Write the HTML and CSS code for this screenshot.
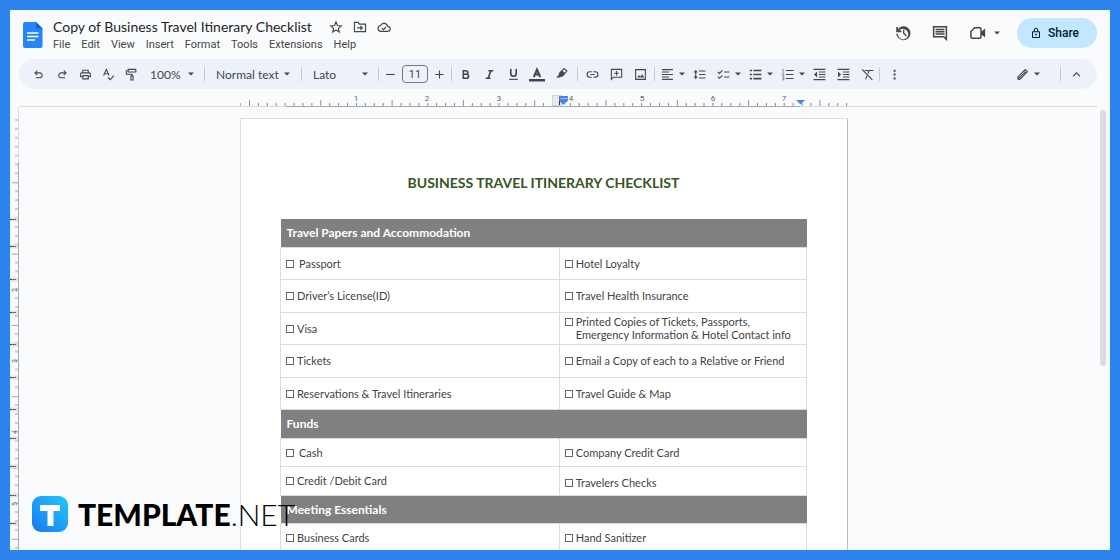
FILE: index.html
```html
<!DOCTYPE html>
<html lang="en">
<head>
<meta charset="utf-8">
<title>Copy of Business Travel Itinerary Checklist</title>
<link rel="stylesheet" href="styles.css">
</head>
<body>
<svg class="sprite" aria-hidden="true">
  <symbol id="caret" viewBox="0 0 8 8"><path d="M1 2.4h6L4 5.6z" fill="currentColor"/></symbol>
</svg>
<div class="app">
  <header class="header">
    <svg class="docs-logo" viewBox="0 0 20 26" aria-label="Docs">
      <path d="M2 0h11l6.500 6.500V24a2 2 0 0 1-2 2H2a2 2 0 0 1-2-2V2a2 2 0 0 1 2-2z" fill="#2684fc"/>
      <path d="M13 0l6.500 6.500H13z" fill="#0066da"/>
      <path d="M4 11h11.500M4 14.500h11.500M4 18h8" stroke="#fff" stroke-width="1.300"/>
    </svg>
    <div class="heading">
      <div class="title-row">
        <h1 class="doc-title">Copy of Business Travel Itinerary Checklist</h1>
        <div class="title-tools">
          <button class="mini" aria-label="Star"><svg viewBox="0 0 24 24"><path d="M12 3.500l2.600 5.900 6.400.6-4.800 4.300 1.400 6.200L12 17.200l-5.600 3.300 1.400-6.200L3 10l6.400-.6z"/></svg></button>
          <button class="mini" aria-label="Move"><svg viewBox="0 0 24 24"><path d="M2.500 20V4h6.500l2 3h10.500v13zM7 13.500h9M12.500 10l3.500 3.500-3.500 3.500"/></svg></button>
          <button class="mini" aria-label="Saved to Drive"><svg viewBox="0 0 24 24"><path d="M6.500 19.500a5 5 0 0 1-.6-9.900 6.500 6.500 0 0 1 12.300 1.300 4.300 4.300 0 0 1 .3 8.600zM8 13.500l3 3 4.500-4.500"/></svg></button>
        </div>
      </div>
      <nav class="menus">
        <button>File</button><button>Edit</button><button>View</button><button>Insert</button><button>Format</button><button>Tools</button><button>Extensions</button><button>Help</button>
      </nav>
    </div>
    <div class="actions">
      <button class="action" aria-label="Version history"><svg viewBox="0 0 24 24"><path class="solid" d="M13 3a9 9 0 0 0-7.700 4.400V4H3v7h7V8.800H6.900A7 7 0 1 1 5.100 13H3a9.200 9.200 0 0 0 9.500 8.500A9.250 9.250 0 0 0 13 3zM12 7.500v5.300l4 3.700 1.300-1.300-3.500-3.200V7.500z"/></svg></button>
      <button class="action" aria-label="Comments"><svg viewBox="0 0 24 24"><path d="M3.500 3.500h17v17L17 17H3.500z"/><path d="M6 7.300h12M6 10.300h12M6 13.300h12"/></svg></button>
      <button class="action meet" aria-label="Join a call"><svg viewBox="0 0 24 24"><path d="M7.500 5H14a2 2 0 0 1 2 2v10a2 2 0 0 1-2 2H4.500a2 2 0 0 1-2-2V10z"/><path class="solid" d="M16 10.500l5.500-4.500v12L16 13.500z"/></svg><svg class="caret"><use href="#caret"/></svg></button>
      <button class="share"><svg viewBox="0 0 24 24"><path d="M5 9.500h14V21H5zM8.500 9.500V6a3.500 3.500 0 0 1 7 0v3.500"/><circle class="solid" cx="12" cy="15.200" r="1.800"/></svg>Share</button>
    </div>
  </header>

  <div class="toolbar" role="toolbar">
    <button class="tool narrow" aria-label="Undo"><svg viewBox="0 -960 960 960"><path class="solid" d="M280-200v-80h284q63 0 109.500-40T720-420q0-60-46.500-100T564-560H312l104 104-56 56-200-200 200-200 56 56-104 104h252q97 0 166.500 63T800-420q0 94-69.500 157T564-200H280Z"/></svg></button>
    <button class="tool" aria-label="Redo"><svg viewBox="0 -960 960 960"><path class="solid" d="M396-200q-97 0-166.500-63T160-420q0-94 69.500-157T396-640h252L544-744l56-56 200 200-200 200-56-56 104-104H396q-63 0-109.500 40T240-420q0 60 46.500 100T396-280h284v80H396Z"/></svg></button>
    <button class="tool narrow" aria-label="Print"><svg viewBox="0 0 24 24"><path class="solid" d="M19 8h-1V3H6v5H5c-1.660 0-3 1.340-3 3v6h4v4h12v-4h4v-6c0-1.660-1.340-3-3-3zM8 5h8v3H8V5zm8 12v2H8v-4h8v2zm2-2v-2H6v2H4v-4c0-.55.45-1 1-1h14c.55 0 1 .45 1 1v4h-2z"/></svg></button>
    <button class="tool narrow" aria-label="Spelling"><svg viewBox="0 0 24 24"><path d="M3 14L8 2.500 13 14M5 10.500h6M11 17.500l4 4L22 14"/></svg></button>
    <button class="tool narrow" aria-label="Paint format"><svg viewBox="0 0 24 24"><path d="M6 2.500h14v5H6zM6 5H2.500v6.500H13V15M11 15h4v7h-4z"/></svg></button>
    <label class="pick zoom"><select aria-label="Zoom"><option>100%</option></select><svg class="caret"><use href="#caret"/></svg></label>
    <span class="sep"></span>
    <label class="pick style"><select aria-label="Styles"><option>Normal text</option></select><svg class="caret"><use href="#caret"/></svg></label>
    <span class="sep"></span>
    <label class="pick font"><select aria-label="Font"><option>Lato</option></select><svg class="caret"><use href="#caret"/></svg></label>
    <span class="sep"></span>
    <button class="tool narrow" aria-label="Decrease font size"><svg viewBox="0 0 24 24"><path d="M4 12h16"/></svg></button>
    <input class="size" type="text" value="11" aria-label="Font size">
    <button class="tool narrow" aria-label="Increase font size"><svg viewBox="0 0 24 24"><path d="M4.500 12h15M12 4.500v15"/></svg></button>
    <span class="sep"></span>
    <div class="group marks">
      <button class="tool" aria-label="Bold"><svg viewBox="0 0 24 24"><path class="heavy" d="M8 5h5a3.300 3.300 0 0 1 0 6.600H8zM8 11.600h6a3.700 3.700 0 0 1 0 7.400H8z"/></svg></button>
      <button class="tool" aria-label="Italic"><svg viewBox="0 0 24 24"><path class="heavy" d="M10 5h9M5 19h9M14.500 5l-5 14"/></svg></button>
      <button class="tool" aria-label="Underline"><svg viewBox="0 0 24 24"><path class="heavy" d="M7 2v8a5 5 0 0 0 10 0V2"/><path d="M4 21h16"/></svg></button>
      <button class="tool wide-icon" aria-label="Text color"><svg viewBox="0 0 18 16"><path class="thin" d="M5.800 11L9 3.500l3.200 7.500M7 8.600h4"/><path class="solid" d="M1 13h16v2.500H1z"/></svg></button>
      <button class="tool" aria-label="Highlight color"><svg viewBox="0 0 24 24"><path d="M8 10l9-9 5 4.500-8.500 9.500H8z"/><path class="solid" d="M8 9.500L13 4.500l5.500 5-5 5.500H8zM2 17.500l4.500-4.500 4 3.500-1.500 1z"/></svg></button>
    </div>
    <span class="sep"></span>
    <div class="group inserts">
      <button class="tool" aria-label="Insert link"><svg viewBox="0 0 24 24"><path d="M10.500 7H7a5 5 0 0 0 0 10h3.500M13.500 7H17a5 5 0 0 1 0 10h-3.500M8 12h8"/></svg></button>
      <button class="tool" aria-label="Add comment"><svg viewBox="0 0 24 24"><path d="M2.500 2.500h19V17H6.500l-4 4zM12 5.500v8.500M7.800 9.800h8.400"/></svg></button>
      <button class="tool" aria-label="Insert image"><svg viewBox="0 0 24 24"><path d="M3 3h18v18H3z"/><path class="solid" d="M6 17.500l3.200-4.500 2.500 3 3.300-4.500 4 6z"/></svg></button>
    </div>
    <span class="sep"></span>
    <button class="tool split" aria-label="Align"><svg viewBox="0 0 24 24"><path d="M2 3h20M2 7.500h13M2 12h20M2 16.500h13M2 21h20"/></svg><svg class="caret"><use href="#caret"/></svg></button>
    <button class="tool" aria-label="Line spacing"><svg viewBox="0 0 24 24"><path d="M11 5.500h12M11 12h12M11 18.500h12M5 5v14"/><path class="solid" d="M1 8.500L5 3.500l4 5zM1 15.500l4 5 4-5z"/></svg></button>
    <button class="tool split" aria-label="Checklist"><svg viewBox="0 0 24 24"><path d="M13 7.500h10M13 16.500h10M1.500 7l3 3L10 4.500M1.500 16l3 3 5.500-5.500"/></svg><svg class="caret"><use href="#caret"/></svg></button>
    <button class="tool split" aria-label="Bulleted list"><svg viewBox="0 0 24 24"><path class="heavy" d="M8 4.500h15M8 12h15M8 19.500h15M1.500 4.500h4M1.500 12h4M1.500 19.500h4"/></svg><svg class="caret"><use href="#caret"/></svg></button>
    <button class="tool split" aria-label="Numbered list"><svg viewBox="0 0 24 24"><path d="M9 4.500h14M9 12h14M9 19.500h14"/><path class="thin" d="M2.500 2H4v6M2 9.500h3.500L2.500 14H6M2 16.500h3.500v5.500H2M3 19h2.500"/></svg><svg class="caret"><use href="#caret"/></svg></button>
    <button class="tool" aria-label="Decrease indent"><svg viewBox="0 0 24 24"><path d="M1 2.500h22M11 7.500h12M11 12h12M11 16.500h12M1 21.500h22"/><path class="solid" d="M7.500 6.500v11L2 12z"/></svg></button>
    <button class="tool" aria-label="Increase indent"><svg viewBox="0 0 24 24"><path d="M1 2.500h22M11 7.500h12M11 12h12M11 16.500h12M1 21.500h22"/><path class="solid" d="M2 6.500v11L7.500 12z"/></svg></button>
    <button class="tool" aria-label="Clear formatting"><svg viewBox="0 0 24 24"><path d="M7 4.500h16M15 5l-2 5.500M11 14l-2.500 7M2 2.500L21 22"/></svg></button>
    <span class="sep"></span>
    <button class="tool more" aria-label="More"><svg viewBox="0 0 24 24"><path class="solid" d="M10.300 3h3.700v3.700h-3.700zM10.300 10.200h3.700v3.700h-3.700zM10.300 17.400h3.700v3.700h-3.700z"/></svg></button>
    <button class="tool split editing" aria-label="Editing mode"><svg viewBox="0 0 24 24"><path d="M3.500 20.500v-4L17 3l4 4L7.500 20.500zM14 6l4 4M4.500 19.500L17.500 7"/></svg><svg class="caret"><use href="#caret"/></svg></button>
    <span class="sep"></span>
    <button class="tool hide" aria-label="Hide the menus"><svg viewBox="0 0 24 24"><path d="M5.500 15.500L12 9l6.500 6.500"/></svg></button>
  </div>

  <div class="ruler">
    <svg class="ruler-scale" viewBox="0 0 608 18">
      <defs>
        <pattern id="inch" x="9" y="0" width="71.300" height="18" patternUnits="userSpaceOnUse">
          <path d="M.5 11v6" stroke="#8c8f93"/>
          <path d="M9.400 14v3M18.300 14v3M27.200 14v3M36.100 14v3M45 14v3M54 14v3M62.900 14v3" stroke="#85888c"/>
        </pattern>
      </defs>
      <path d="M46 17.500h514" stroke="#a9abae"/>
      <path d="M.5 14v3" stroke="#b0b2b5"/>
      <rect x="9" width="599" height="17" fill="url(#inch)"/>
      <rect x="312.500" y="6.500" width="9" height="10" fill="#e8e8e8" stroke="#d5d5d5"/>
      <g class="ruler-num">
        <text x="116" y="12">1</text><text x="187" y="12">2</text><text x="259" y="12">3</text><text x="331" y="12">4</text><text x="402" y="12">5</text><text x="473" y="12">6</text><text x="544" y="12">7</text>
      </g>
      <path d="M319.500 7v9" stroke="#333"/>
      <path d="M319 7h9v2h-9zM319 9.500h9v2L323.500 16 319 11.500z" fill="#4285f4"/>
      <path d="M556 11h9l-4.500 4.500z" fill="#4285f4"/>
    </svg>
  </div>

  <main class="workspace">
    <svg class="side-ruler">
      <defs>
        <pattern id="vinch" x="0" y="4" width="9" height="71.300" patternUnits="userSpaceOnUse">
          <path d="M5 8.900h3M5 17.800h3M5 26.700h3M5 35.600h3M5 44.500h3M5 53.400h3M5 62.300h3" stroke="#9a9da0"/>
          <path d="M2 .5h6" stroke="#a0a3a6"/>
        </pattern>
      </defs>
      <path d="M8.500 0v55" stroke="#dadce0"/>
      <path d="M8.500 55v500" stroke="#a9abae"/>
      <rect y="12" width="9" height="440" fill="url(#vinch)"/>
      <g class="side-num">
        <text transform="translate(7 183) rotate(-90)">2</text><text transform="translate(7 254) rotate(-90)">3</text><text transform="translate(7 325) rotate(-90)">4</text><text transform="translate(7 397) rotate(-90)">5</text>
      </g>
      <path d="M0 112.500h8M0 139.500h8M0 172.500h8M0 205.500h8M0 237.500h8M0 270.500h8M0 302.500h8M0 331.500h8M0 359.500h8M0 388.500h8M0 416.500h8" stroke="#e2e2e2" stroke-width="4"/>
      <path d="M0 112.500h6M0 139.500h6M0 172.500h6M0 205.500h6M0 237.500h6M0 270.500h6M0 302.500h6M0 331.500h6M0 359.500h6M0 388.500h6M0 416.500h6" stroke="#444" stroke-dasharray="2 .6"/>
    </svg>
    <div class="canvas">
      <article class="page">
        <h2 class="page-title">BUSINESS TRAVEL ITINERARY CHECKLIST</h2>
        <table class="checklist">
          <colgroup><col class="col-left"><col></colgroup>
          <tr class="section"><th colspan="2">Travel Papers and Accommodation</th></tr>
          <tr><td><label class="spaced"><input type="checkbox">Passport</label></td><td><label><input type="checkbox">Hotel Loyalty</label></td></tr>
          <tr><td><label><input type="checkbox">Driver’s License(ID)</label></td><td><label><input type="checkbox">Travel Health Insurance</label></td></tr>
          <tr><td><label><input type="checkbox">Visa</label></td><td><label><input type="checkbox"><span>Printed Copies of Tickets, Passports,<br>Emergency Information &amp; Hotel Contact info</span></label></td></tr>
          <tr><td><label><input type="checkbox">Tickets</label></td><td><label><input type="checkbox">Email a Copy of each to a Relative or Friend</label></td></tr>
          <tr><td><label><input type="checkbox">Reservations &amp; Travel Itineraries</label></td><td><label><input type="checkbox">Travel Guide &amp; Map</label></td></tr>
          <tr class="section"><th colspan="2">Funds</th></tr>
          <tr class="short"><td><label class="spaced"><input type="checkbox">Cash</label></td><td><label><input type="checkbox">Company Credit Card</label></td></tr>
          <tr class="short"><td><label><input type="checkbox">Credit /Debit Card</label></td><td class="low"><label><input type="checkbox">Travelers Checks</label></td></tr>
          <tr class="section"><th colspan="2">Meeting Essentials</th></tr>
          <tr class="short"><td><label><input type="checkbox">Business Cards</label></td><td><label><input type="checkbox">Hand Sanitizer</label></td></tr>
        </table>
      </article>
    </div>
    <div class="scrollbar"></div>
  </main>
</div>

<div class="brand">
  <svg viewBox="0 0 36 36" aria-hidden="true">
    <defs><linearGradient id="badge" x1="0" y1="1" x2="1" y2="0"><stop offset="0" stop-color="#1877f2"/><stop offset="1" stop-color="#22c8fc"/></linearGradient></defs>
    <rect width="36" height="36" rx="9" fill="url(#badge)"/>
    <path d="M8 9h20v6h-6.500v15h-6V15H8z" fill="#fff"/>
  </svg>
  <span class="brand-name"><b>TEMPLATE</b>.NET</span>
</div>
</body>
</html>
```
FILE: styles.css
```css
* { box-sizing: border-box; }
body {
  margin: 0;
  height: 100vh;
  padding: 10px;
  background: #2c83eb;
  font-family: Roboto, "Liberation Sans", sans-serif;
  color: #444746;
  overflow: hidden;
}
button, input, select { font: inherit; color: inherit; }
button { border: 0; padding: 0; background: none; }
svg path, svg circle { fill: none; }
.sprite { display: none; }
.caret { width: 8px; height: 8px; flex: none; color: #444746; }
.sprite path { fill: #444746; }

.app {
  height: 100%;
  display: flex;
  flex-direction: column;
  background: #f9fbfd;
  overflow: hidden;
}

/* Header */
.header { display: flex; height: 49px; flex: none; padding: 0 13px; }
.docs-logo { width: 20px; height: 26px; margin-top: 12px; }
.docs-logo path[fill="#2684fc"] { fill: #2684fc; }
.docs-logo path[fill="#0066da"] { fill: #0066da; }
.heading { margin: 7px 0 0 10px; }
.title-row { display: flex; align-items: center; gap: 12px; height: 20px; }
.doc-title {
  margin: 0;
  font-family: Lato, "Open Sans", sans-serif;
  font-size: 14px;
  font-weight: 400;
  line-height: 20px;
  color: #1f1f1f;
}
.title-tools { display: flex; }
.mini { width: 24px; height: 20px; display: grid; place-items: center; }
.mini svg { width: 14px; height: 14px; }
.menus { display: flex; gap: 11px; font-size: 11px; line-height: 16px; }
.mini path, .action path, .share path, .tool path {
  stroke: #444746;
  stroke-width: 2;
}
.actions { display: flex; align-items: center; margin-left: auto; height: 46px; }
.action { width: 37px; display: flex; align-items: center; justify-content: center; }
.action svg { width: 18px; height: 18px; }
.action.meet { width: 54px; gap: 6px; margin-right: 5px; }
.action.meet .caret { width: 8px; height: 8px; }
.share {
  display: flex;
  align-items: center;
  gap: 6px;
  height: 30px;
  padding: 0 18px 0 13px;
  border-radius: 15px;
  background: #c2e7ff;
  color: #001d35;
  font-size: 12px;
  font-weight: 500;
}
.share svg { width: 12px; height: 12px; }
.share path { stroke: #001d35; }
.share .solid { fill: #001d35; }
path.solid { fill: #444746; }
.mini path.solid, .action path.solid, .tool path.solid { stroke: none; }
.tool path.heavy { stroke-width: 3; }
.tool path.thin { stroke-width: 1; }
.wide-icon path.thin { stroke-width: 2; }

/* Toolbar */
.toolbar {
  display: flex;
  align-items: center;
  flex: none;
  height: 30px;
  margin: 0 13px 0 9px;
  padding: 0 9px 0 8px;
  border-radius: 15px;
  background: #edf2fa;
  font-size: 12px;
}
.tool { width: 24px; height: 24px; flex: none; display: flex; align-items: center; justify-content: center; }
.tool svg { width: 13px; height: 13px; flex: none; }
.tool .caret, .action .caret { width: 8px; height: 8px; }
.tool.narrow { width: 23px; }
.tool.split { width: 32px; gap: 4px; justify-content: flex-end; padding-right: 1px; }
.tool.wide-icon svg { width: 18px; height: 16px; }
.tool.more { width: 29px; }
.sep { width: 1px; height: 14px; flex: none; background: #c7cacf; }
.pick { display: grid; align-items: center; flex: none; font-family: Lato, "Open Sans", sans-serif; }
.pick > * { grid-area: 1 / 1; }
.pick select {
  width: 100%;
  height: 24px;
  appearance: none;
  border: 0;
  background: none;
  padding: 0 0 0 11px;
}
.pick .caret { justify-self: end; margin-right: 9px; pointer-events: none; }
.pick.zoom { width: 61px; }
.pick.zoom select { padding-left: 7px; }
.pick.style { width: 96px; }
.pick.style .caret { margin-right: 10px; }
.pick.font { width: 76px; }
.size {
  width: 26px;
  height: 18px;
  flex: none;
  padding: 0;
  border: 1px solid #747775;
  border-radius: 4px;
  background: none;
  font-size: 11px;
  text-align: center;
}
.group { display: flex; flex: none; }
.marks { padding: 0 4px 0 1px; }
.inserts { padding: 0 2px; }
.editing { margin: 0 18px 0 auto; }
.hide { margin-left: 3px; }

/* Rulers */
.ruler {
  display: flex;
  justify-content: center;
  flex: none;
  height: 18px;
  margin: 0 13px 0 9px;
  padding-right: 28px;
  border-bottom: 1px solid #dadce0;
}
.ruler-scale { width: 608px; height: 18px; flex: none; }
.ruler-scale path[fill="#4285f4"] { fill: #4285f4; }
.ruler-num, .side-num { font-size: 8px; text-anchor: middle; fill: #5f6368; }
.side-num { font-size: 7px; }
.side-ruler { width: 9px; height: 100%; }

/* Document */
.workspace {
  display: grid;
  grid-template-columns: 9px 1fr 14px;
  flex: 1;
  min-height: 0;
  overflow: hidden;
}
.canvas { display: flex; justify-content: center; padding: 11px 27px 0 0; overflow: hidden; }
.page {
  width: 608px;
  height: 800px;
  flex: none;
  padding: 0 40px 0 39px;
  border: 1px solid #dedfe0;
  border-right-color: #bdbebf;
  background: #fff;
  font-family: Lato, "Noto Sans", sans-serif;
}
.page-title {
  margin: 53px 0 25px;
  font-size: 14px;
  font-weight: 700;
  line-height: 22px;
  text-align: center;
  color: #375623;
}
.checklist {
  width: 100%;
  border-collapse: collapse;
  table-layout: fixed;
  font-size: 11px;
  line-height: 13px;
  color: #434343;
}
.col-left { width: 53%; }
.checklist td { height: 32px; padding: 0 5px; border: 1px solid #dcdcdc; }
.checklist tr:nth-child(odd) td { height: 33px; }
.checklist th {
  height: 28px;
  padding: 0 6px;
  background: #808080;
  color: #fff;
  font-size: 12px;
  text-align: left;
}
.checklist .section + .short td { height: 28px; }
.checklist .short + .short td { height: 29px; }
.checklist .short + .section th { height: 28px; }
.checklist tr + .section th { height: 29px; }
.checklist td.low { padding-top: 4px; }
.checklist label { display: flex; align-items: flex-start; gap: 3px; }
.checklist label.spaced { gap: 5px; }
.checklist input {
  appearance: none;
  flex: none;
  width: 8px;
  height: 8px;
  margin: 3px 0 0;
  border: 1px solid #666;
}
.scrollbar { width: 6px; height: 256px; margin: 3px 0 0 4px; border-radius: 3px; background: #dadce0; }

/* Watermark over the document */
.brand { position: absolute; left: 32px; bottom: 28px; display: flex; align-items: center; gap: 10px; }
.brand svg { width: 36px; height: 36px; }
.brand svg path { fill: #fff; }
.brand-name {
  font-family: Lato, "Open Sans", sans-serif;
  font-size: 30px;
  font-weight: 300;
  line-height: 36px;
  color: #000;
}
.brand-name b { font-weight: 900; }
```
